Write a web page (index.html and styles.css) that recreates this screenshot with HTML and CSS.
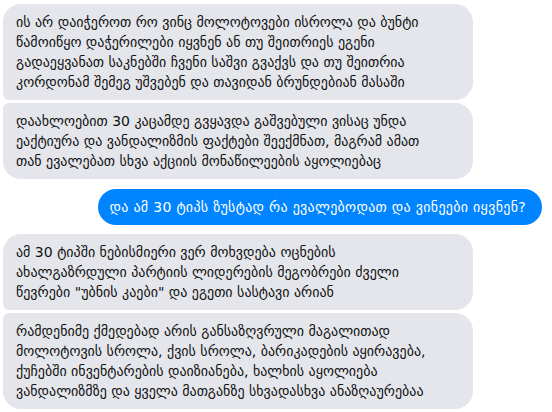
FILE: index.html
```html
<!DOCTYPE html>
<html lang="ka">
<head>
<meta charset="utf-8">
<link rel="stylesheet" href="styles.css">
</head>
<body>
<div class="chat">
  <div class="group group-in">
    <div class="bubble in first">ის არ დაიჭეროთ რო ვინც მოლოტოვები ისროლა და ბუნტი<br>წამოიწყო დაჭერილები იყვნენ ან თუ შეითრიეს ეგენი<br>გადაეყვანათ საკნებში ჩვენი საშვი გვაქვს და თუ შეითრია<br>კორდონამ შემეგ უშვებენ და თავიდან ბრუნდებიან მასაში</div>
    <div class="bubble in last">დაახლოებით 30 კაცამდე გვყავდა გაშვებული ვისაც უნდა<br>ეაქტიურა და ვანდალიზმის ფაქტები შეექმნათ, მაგრამ ამათ<br>თან ევალებათ სხვა აქციის მონაწილეების აყოლიებაც</div>
  </div>
  <div class="group group-out">
    <div class="bubble out">და ამ 30 ტიპს ზუსტად რა ევალებოდათ და ვინეები იყვნენ?</div>
  </div>
  <div class="group group-in">
    <div class="bubble in first">ამ 30 ტიპში ნებისმიერი ვერ მოხვდება ოცნების<br>ახალგაზრდული პარტიის ლიდერების მეგობრები ძველი<br>წევრები "უბნის კაები" და ეგეთი სასტავი არიან</div>
    <div class="bubble in last">რამდენიმე ქმედებად არის განსაზღვრული მაგალითად<br>მოლოტოვის სროლა, ქვის სროლა, ბარიკადების აყირავება,<br>ქუჩებში ინვენტარების დაიზიანება, ხალხის აყოლიება<br>ვანდალიზმზე და ყველა მათგანზე სხვადასხვა ანაზღაურებაა</div>
  </div>
</div>
</body>
</html>
```

FILE: styles.css
```css
html, body {
  margin: 0;
  padding: 0;
  background: #ffffff;
}
.chat {
  width: 552px;
  height: 412px;
  box-sizing: border-box;
  padding: 4px 10px 0 3px;
  display: flex;
  flex-direction: column;
  font-family: "DejaVu Sans", sans-serif;
  font-size: 14px;
  line-height: 20px;
  color: #111111;
}
.group {
  display: flex;
  flex-direction: column;
  gap: 3px;
}
.group-in {
  align-items: flex-start;
}
.group-out {
  align-items: flex-end;
  margin: 10px 0 9px;
}
.bubble {
  box-sizing: border-box;
  padding: 8px 13px;
  white-space: nowrap;
}
.in {
  width: 470px;
  background: #e4e6eb;
  border-radius: 18px;
}
.in.first {
  border-bottom-left-radius: 6px;
}
.in.last {
  border-top-left-radius: 6px;
}
.out {
  background: #0084ff;
  color: #ffffff;
  border-radius: 18px;
  padding: 8px 16px 8px 12px;
  letter-spacing: 0.3px;
}
```
